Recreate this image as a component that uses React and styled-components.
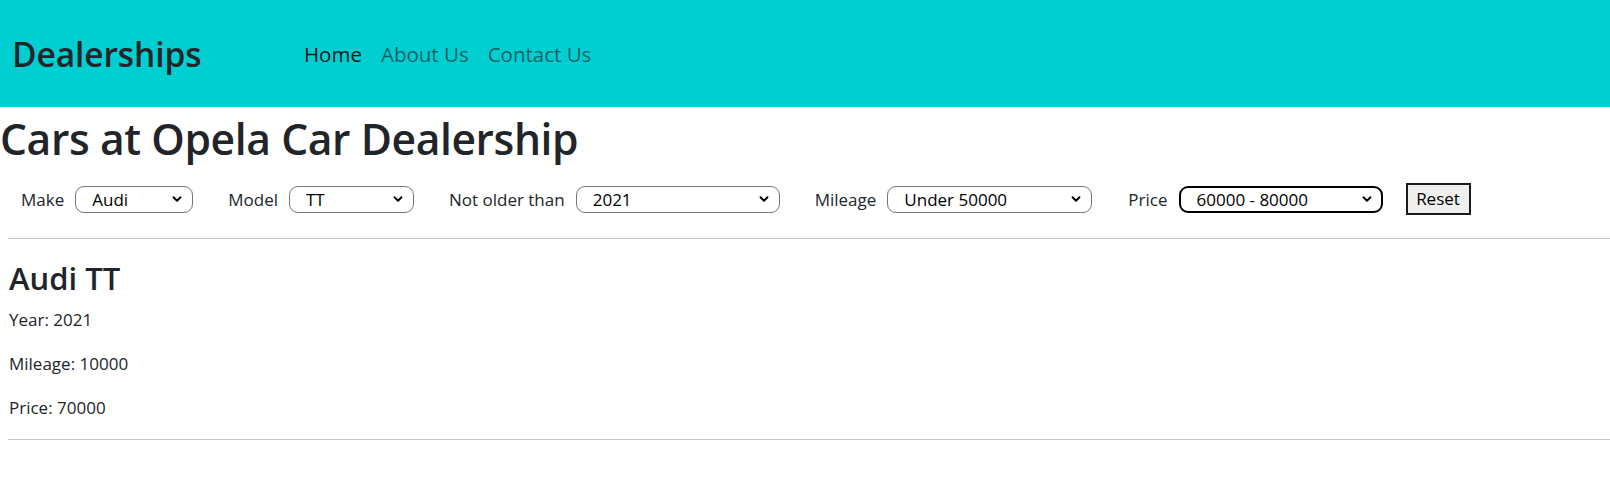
import React, { useState } from "react";
import styled, { createGlobalStyle } from "styled-components";
import { ChevronDown } from "lucide-react";

const GlobalStyle = createGlobalStyle`
  * { box-sizing: border-box; }
  body {
    margin: 0;
    font-family: "Open Sans", "Noto Sans", sans-serif;
    color: #212529;
    background: #fff;
    font-size: 17px;
  }
`;

const NavBar = styled.header`
  height: 107px;
  background: #00ced1;
  display: flex;
  align-items: center;
  padding: 0 12px;
`;

const Brand = styled.div`
  font-size: 33.5px;
  font-weight: 600;
  width: 292px;
  letter-spacing: -0.1px;
`;

const NavLinks = styled.nav`
  display: flex;
  gap: 19px;
  padding-top: 0;
`;

const NavLink = styled.a`
  font-size: 20.5px;
  color: ${(p) => (p.$active ? "rgba(0,0,0,0.9)" : "rgba(0,0,0,0.55)")};
  text-decoration: none;
  cursor: pointer;
`;

const Title = styled.h1`
  margin: 0;
  padding: 6px 0 0 0;
  font-size: 42.6px;
  font-weight: 600;
  line-height: 50.4px;
  letter-spacing: -0.4px;
`;

const Filters = styled.form`
  display: flex;
  align-items: center;
  padding: 0 0 3px 21px;
  height: 75px;
`;

const Field = styled.label`
  display: flex;
  align-items: center;
  gap: 11px;
  margin-right: ${(p) => p.$gap || 35}px;
  font-size: 17px;
`;

const SelectWrap = styled.span`
  position: relative;
  display: inline-flex;
  width: ${(p) => p.$w}px;
`;

const Select = styled.select`
  appearance: none;
  width: 100%;
  height: 27px;
  padding: 0 28px 0 16px;
  font-family: inherit;
  font-size: 17px;
  color: #000;
  background: #fff;
  border: ${(p) => (p.$focused ? "2px solid #000" : "1px solid #767676")};
  border-radius: 9px;
  outline: none;
`;

const Chevron = styled(ChevronDown)`
  position: absolute;
  right: 9px;
  top: 50%;
  transform: translateY(-50%);
  pointer-events: none;
  color: #000;
`;

const ResetButton = styled.button`
  height: 32px;
  width: 65px;
  font-family: inherit;
  font-size: 17px;
  color: #000;
  background: #efefef;
  border: 2px solid #1b1b1b;
  padding: 0 0 1px;
`;

const Rule = styled.hr`
  margin: 0 0 0 8px;
  border: 0;
  border-top: 1px solid #c8c8c8;
`;

const Car = styled.section`
  padding: 20px 0 0 9px;
`;

const CarName = styled.h2`
  margin: 0 0 8px;
  font-size: 31px;
  font-weight: 600;
  line-height: 39.6px;
`;

const Detail = styled.p`
  margin: 0 0 17.5px;
  font-size: 17px;
  line-height: 26.6px;
`;

const filters = [
  { label: "Make", w: 118, options: ["Audi", "BMW", "Opel"] },
  { label: "Model", w: 125, options: ["TT", "A4", "A6"] },
  { label: "Not older than", w: 204, options: ["2021", "2020", "2019"] },
  { label: "Mileage", w: 205, options: ["Under 50000", "Under 100000"], gap: 36 },
  { label: "Price", w: 204, options: ["60000 - 80000", "40000 - 60000"], focused: true, gap: 23 },
];

const cars = [{ make: "Audi", model: "TT", year: 2021, mileage: 10000, price: 70000 }];

export default function App() {
  const [values, setValues] = useState(filters.map((f) => f.options[0]));

  return (
    <>
      <GlobalStyle />
      <NavBar>
        <Brand>Dealerships</Brand>
        <NavLinks>
          <NavLink $active>Home</NavLink>
          <NavLink>About Us</NavLink>
          <NavLink>Contact Us</NavLink>
        </NavLinks>
      </NavBar>
      <Title>Cars at Opela Car Dealership</Title>
      <Filters onSubmit={(e) => e.preventDefault()}>
        {filters.map((f, i) => (
          <Field key={f.label} $gap={f.gap}>
            {f.label}
            <SelectWrap $w={f.w}>
              <Select
                $focused={f.focused}
                value={values[i]}
                onChange={(e) => {
                  const next = [...values];
                  next[i] = e.target.value;
                  setValues(next);
                }}
              >
                {f.options.map((o) => (
                  <option key={o}>{o}</option>
                ))}
              </Select>
              <Chevron size={14} strokeWidth={3.2} />
            </SelectWrap>
          </Field>
        ))}
        <ResetButton type="button" onClick={() => setValues(filters.map((f) => f.options[0]))}>
          Reset
        </ResetButton>
      </Filters>
      <Rule />
      {cars.map((c) => (
        <Car key={c.model}>
          <CarName>
            {c.make} {c.model}
          </CarName>
          <Detail>Year: {c.year}</Detail>
          <Detail>Mileage: {c.mileage}</Detail>
          <Detail>Price: {c.price}</Detail>
        </Car>
      ))}
      <Rule />
    </>
  );
}
